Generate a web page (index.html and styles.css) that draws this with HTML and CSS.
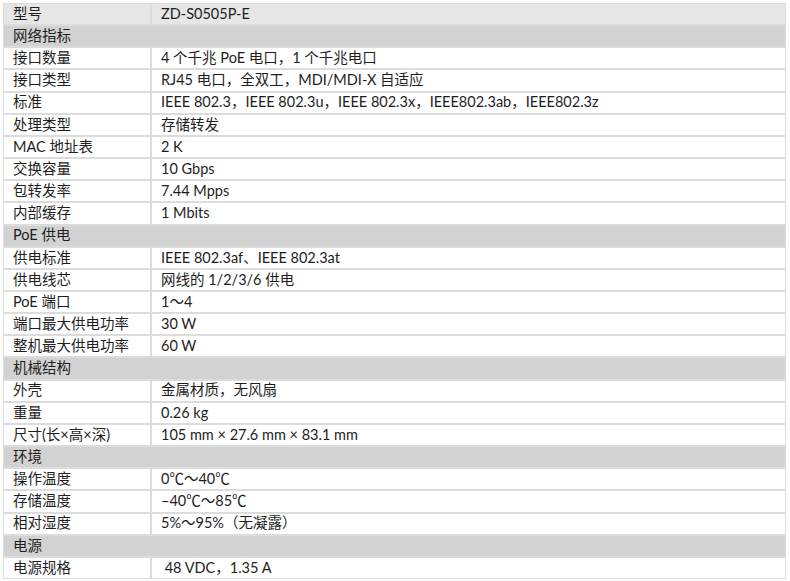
FILE: index.html
```html
<!DOCTYPE html>
<html lang="zh">
<head>
<meta charset="utf-8">
<link rel="stylesheet" href="styles.css">
</head>
<body>
<div class="spec">
  <div class="k head">型号</div><div class="v head">ZD-S0505P-E</div>
  <div class="sec">网络指标</div>
  <div class="k">接口数量</div><div class="v">4 个千兆 PoE 电口，1 个千兆电口</div>
  <div class="k">接口类型</div><div class="v">RJ45 电口，全双工，MDI/MDI-X 自适应</div>
  <div class="k">标准</div><div class="v">IEEE 802.3，IEEE 802.3u，IEEE 802.3x，IEEE802.3ab，IEEE802.3z</div>
  <div class="k">处理类型</div><div class="v">存储转发</div>
  <div class="k">MAC 地址表</div><div class="v">2 K</div>
  <div class="k">交换容量</div><div class="v">10 Gbps</div>
  <div class="k">包转发率</div><div class="v">7.44 Mpps</div>
  <div class="k">内部缓存</div><div class="v">1 Mbits</div>
  <div class="sec">PoE 供电</div>
  <div class="k">供电标准</div><div class="v">IEEE 802.3af、IEEE 802.3at</div>
  <div class="k">供电线芯</div><div class="v">网线的 1/2/3/6 供电</div>
  <div class="k">PoE 端口</div><div class="v">1～4</div>
  <div class="k">端口最大供电功率</div><div class="v">30 W</div>
  <div class="k">整机最大供电功率</div><div class="v">60 W</div>
  <div class="sec">机械结构</div>
  <div class="k">外壳</div><div class="v">金属材质，无风扇</div>
  <div class="k">重量</div><div class="v">0.26 kg</div>
  <div class="k">尺寸(长×高×深)</div><div class="v">105 mm × 27.6 mm × 83.1 mm</div>
  <div class="sec">环境</div>
  <div class="k">操作温度</div><div class="v">0℃～40℃</div>
  <div class="k">存储温度</div><div class="v">–40℃～85℃</div>
  <div class="k">相对湿度</div><div class="v">5%～95%（无凝露）</div>
  <div class="sec">电源</div>
  <div class="k">电源规格</div><div class="v">&nbsp;48 VDC，1.35 A</div>
</div>
</body>
</html>
```
FILE: styles.css
```css
html, body {
  margin: 0;
  padding: 0;
  background: #ffffff;
}
body {
  padding: 3px 4px 2px 3px;
  font-family: Lato, "Noto Sans CJK SC", sans-serif;
  font-size: 14.5px;
  color: #1e1e1e;
}
.spec {
  display: grid;
  grid-template-columns: 146px 1fr;
  grid-template-rows: repeat(26, 1fr);
  height: 576px;
  gap: 2px;
  background: #dcdcdc;
  border: 1px solid #dcdcdc;
  box-sizing: border-box;
}
.k, .v, .sec {
  background: #ffffff;
  display: flex;
  align-items: center;
  white-space: nowrap;
  line-height: 1;
}
.k {
  padding-left: 9px;
}
.v {
  padding-left: 9px;
}
.head {
  background: #e6e6e6;
}
.sec {
  grid-column: 1 / -1;
  background: #d2d2d2;
  padding-left: 9px;
}
```
